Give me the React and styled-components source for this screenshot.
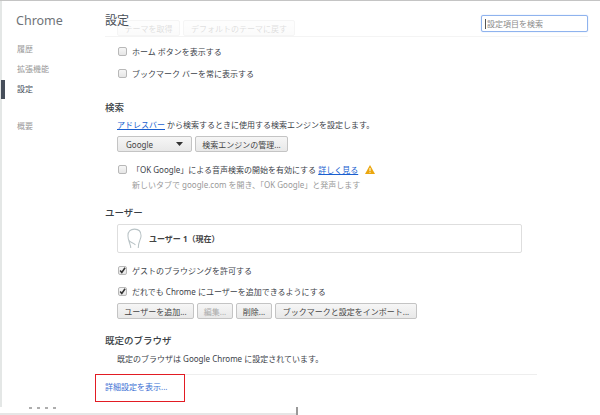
import React from "react";
import styled, { createGlobalStyle } from "styled-components";

const GlobalStyle = createGlobalStyle`
  html, body {
    margin: 0;
    padding: 0;
    background: #fff;
  }
  body {
    font-family: "Noto Sans", "Noto Sans CJK JP", sans-serif;
    font-size: 8px;
    color: #3c4249;
  }
`;

const Window = styled.div`
  position: relative;
  width: 600px;
  height: 415px;
  box-sizing: border-box;
  border-top: 1px solid #c4c4c4;
  overflow: hidden;
  display: flex;
  background: #fff;
`;

const Sidebar = styled.nav`
  width: 105px;
  flex-shrink: 0;
  box-sizing: border-box;
  padding-top: 11px;
  border-left: 2px solid #e4e7e6;
  height: 406px;
`;

const Brand = styled.div`
  font-size: 12.5px;
  line-height: 18px;
  color: #6f7378;
  padding-left: 14px;
  margin-bottom: 9px;
`;

const NavItem = styled.div`
  position: relative;
  height: 20px;
  line-height: 20px;
  padding-left: 15px;
  font-size: 8px;
  color: ${(p) => (p.$active ? "#464e5a" : "#999")};
  margin-bottom: ${(p) => p.$gap || 0}px;
  ${(p) =>
    p.$active &&
    `&::before {
      content: "";
      position: absolute;
      left: -1px;
      top: 1px;
      width: 4px;
      height: 19px;
      background: #464e5a;
    }`}
`;

const Main = styled.main`
  flex: 1;
  position: relative;
  padding-top: 42px;
  min-width: 0;
`;

const Header = styled.header`
  position: absolute;
  left: 0;
  top: 0;
  width: 483px;
  height: 35px;
  display: flex;
  justify-content: space-between;
  align-items: flex-start;
  background: rgba(255, 255, 255, 0.75);
  border-bottom: 1px solid #f4f4f4;
`;

const PageTitle = styled.h1`
  margin: 10px 0 0;
  font-size: 12px;
  font-weight: normal;
  line-height: 20px;
  color: #4a5058;
`;

const SearchBox = styled.div`
  margin-top: 14px;
  width: 107px;
  height: 17px;
  box-sizing: border-box;
  border: 1px solid #8fb3ee;
  border-radius: 2px;
  padding-left: 3px;
  font-size: 8px;
  line-height: 15px;
  color: #8b8b8b;
  box-shadow: 0 0 1px #8fb3ee;
  &::before {
    content: "";
    display: inline-block;
    width: 1px;
    height: 10px;
    margin-right: 1px;
    vertical-align: -2px;
    background: #555;
  }
`;

const HiddenButtons = styled.div`
  position: absolute;
  left: 12px;
  top: 19px;
  display: flex;
  gap: 3px;
`;

const Section = styled.section`
  margin-bottom: ${(p) => p.$gap || 0}px;
`;

const SectionTitle = styled.h3`
  margin: 0 0 ${(p) => p.$gap || 4}px;
  font-size: 9.5px;
  font-weight: 500;
  line-height: 16px;
  color: #3a3f46;
`;

const Body = styled.div`
  padding-left: 12px;
`;

const Row = styled.div`
  display: flex;
  align-items: center;
  height: 16px;
  margin-bottom: ${(p) => p.$gap || 0}px;
  white-space: nowrap;
`;

const Box = styled.span`
  display: inline-flex;
  align-items: center;
  justify-content: center;
  box-sizing: border-box;
  width: 9px;
  height: 9px;
  margin: 0 5px 0 1px;
  flex-shrink: 0;
  border: 1px solid #b8b8b8;
  border-radius: 2px;
  background: linear-gradient(#f6f6f6, #e6e6e6);
`;

const Link = styled.a`
  color: ${(p) => (p.$plain ? "#3b6fd4" : "#1a5fd0")};
  text-decoration: ${(p) => (p.$plain ? "none" : "underline")};
`;

const Text = styled.div`
  line-height: 16px;
  white-space: nowrap;
  margin-bottom: ${(p) => p.$gap || 0}px;
`;

const Hint = styled.div`
  padding-left: 15px;
  line-height: 16px;
  color: #999;
  white-space: nowrap;
`;

const Controls = styled.div`
  display: flex;
  align-items: center;
  gap: 3px;
  margin-bottom: ${(p) => p.$gap || 0}px;
`;

const Button = styled.div`
  height: 16px;
  box-sizing: border-box;
  padding: 0 ${(p) => (p.$select ? "8px" : "0")};
  display: flex;
  align-items: center;
  justify-content: ${(p) => (p.$select ? "space-between" : "center")};
  width: ${(p) => p.$width}px;
  border: 1px solid #c4c4c4;
  border-radius: 2px;
  background: linear-gradient(#f6f6f6, #e8e8e8);
  color: ${(p) => (p.$disabled ? "#aaa" : "#444")};
  white-space: nowrap;
  opacity: ${(p) => (p.$faint ? 0.7 : 1)};
`;

const UserCard = styled.div`
  width: 405px;
  height: 29px;
  box-sizing: border-box;
  border: 1px solid #dedede;
  border-radius: 2px;
  display: flex;
  align-items: center;
  padding-left: 9px;
  gap: 7px;
  margin-bottom: 9px;
`;

const UserName = styled.span`
  font-size: 8px;
  font-weight: 700;
  color: #444;
`;

const Divider = styled.div`
  width: 432px;
  border-top: 1px solid #eee;
  margin: 7px 0 4px;
`;

const Highlight = styled.div`
  position: absolute;
  left: 95px;
  top: 373px;
  width: 90px;
  height: 28px;
  box-sizing: border-box;
  border: 1px solid #e21b23;
`;

const Footer = styled.div`
  position: absolute;
  left: 0;
  bottom: 0;
  width: 296px;
  height: 2px;
  background: #e6e6e6;
`;

const Scrap = styled.div`
  position: absolute;
  left: 29px;
  top: 406px;
  width: 31px;
  height: 2px;
  background-image: repeating-linear-gradient(90deg, #777 0 3px, transparent 3px 8px);
  opacity: 0.6;
`;

const ScrollEdge = styled.div`
  position: absolute;
  left: 296px;
  top: 406px;
  width: 2px;
  height: 8px;
  background: #999;
`;

const Check = () => (
  <svg width="7" height="7" viewBox="0 0 9 9">
    <path d="M1.5 4.5 L3.6 7 L7.8 1" fill="none" stroke="#333" strokeWidth="2" />
  </svg>
);

const Caret = () => (
  <svg width="7" height="4" viewBox="0 0 7 4">
    <path d="M0 0 H7 L3.5 4 Z" fill="#333" />
  </svg>
);

const Warning = () => (
  <svg width="10" height="9" viewBox="0 0 10 9" style={{ marginLeft: 7 }}>
    <path d="M5 0 L10 9 H0 Z" fill="#eba70e" />
    <rect x="4.5" y="3" width="1" height="3" fill="#fff" />
    <rect x="4.5" y="6.8" width="1" height="1" fill="#fff" />
  </svg>
);

const Avatar = () => (
  <svg width="15" height="21" viewBox="0 0 16 22">
    <path
      d="M4 21 C4 17 1 14 1 8 C1 3 4 1 8 1 C12 1 15 3 15 8 C15 12 12 14 12 21 M1.5 12 C3 16 7 15 9 18"
      fill="none"
      stroke="#b9c3c6"
      strokeWidth="1.1"
    />
  </svg>
);

const App = () => (
  <>
    <GlobalStyle />
    <Window>
      <Sidebar>
        <Brand>Chrome</Brand>
        <NavItem>履歴</NavItem>
        <NavItem>拡張機能</NavItem>
        <NavItem $active $gap={17}>設定</NavItem>
        <NavItem>概要</NavItem>
      </Sidebar>
      <Main>
        <HiddenButtons>
          <Button $faint $width={63}>テーマを取得</Button>
          <Button $faint $width={112}>デフォルトのテーマに戻す</Button>
        </HiddenButtons>
        <Header>
          <PageTitle>設定</PageTitle>
          <SearchBox>設定項目を検索</SearchBox>
        </Header>
        <Section $gap={19}>
          <Body>
            <Row $gap={6}><Box />ホーム ボタンを表示する</Row>
            <Row><Box />ブックマーク バーを常に表示する</Row>
          </Body>
        </Section>
        <Section $gap={12}>
          <SectionTitle $gap={1}>検索</SectionTitle>
          <Body>
            <Text $gap={3}>
              <Link>アドレスバー</Link> から検索するときに使用する検索エンジンを設定します。
            </Text>
            <Controls $gap={9}>
              <Button $select $width={75}>Google<Caret /></Button>
              <Button $width={93}>検索エンジンの管理...</Button>
            </Controls>
            <Row>
              <Box />「OK Google」による音声検索の開始を有効にする&nbsp;<Link>詳しく見る</Link>
              <Warning />
            </Row>
            <Hint>新しいタブで google.com を開き、「OK Google」と発声します</Hint>
          </Body>
        </Section>
        <Section $gap={14}>
          <SectionTitle $gap={3}>ユーザー</SectionTitle>
          <Body>
            <UserCard>
              <Avatar />
              <UserName>ユーザー 1（現在）</UserName>
            </UserCard>
            <Row $gap={5}><Box><Check /></Box>ゲストのブラウジングを許可する</Row>
            <Row $gap={4}><Box><Check /></Box>だれでも Chrome にユーザーを追加できるようにする</Row>
            <Controls>
              <Button $width={77}>ユーザーを追加...</Button>
              <Button $width={36} $disabled>編集...</Button>
              <Button $width={36}>削除...</Button>
              <Button $width={142}>ブックマークと設定をインポート...</Button>
            </Controls>
          </Body>
        </Section>
        <Section>
          <SectionTitle $gap={2}>既定のブラウザ</SectionTitle>
          <Body>
            <Text>既定のブラウザは Google Chrome に設定されています。</Text>
          </Body>
        </Section>
        <Divider />
        <Text><Link $plain>詳細設定を表示...</Link></Text>
      </Main>
      <Highlight />
      <Scrap />
      <ScrollEdge />
      <Footer />
    </Window>
  </>
);

export default App;
